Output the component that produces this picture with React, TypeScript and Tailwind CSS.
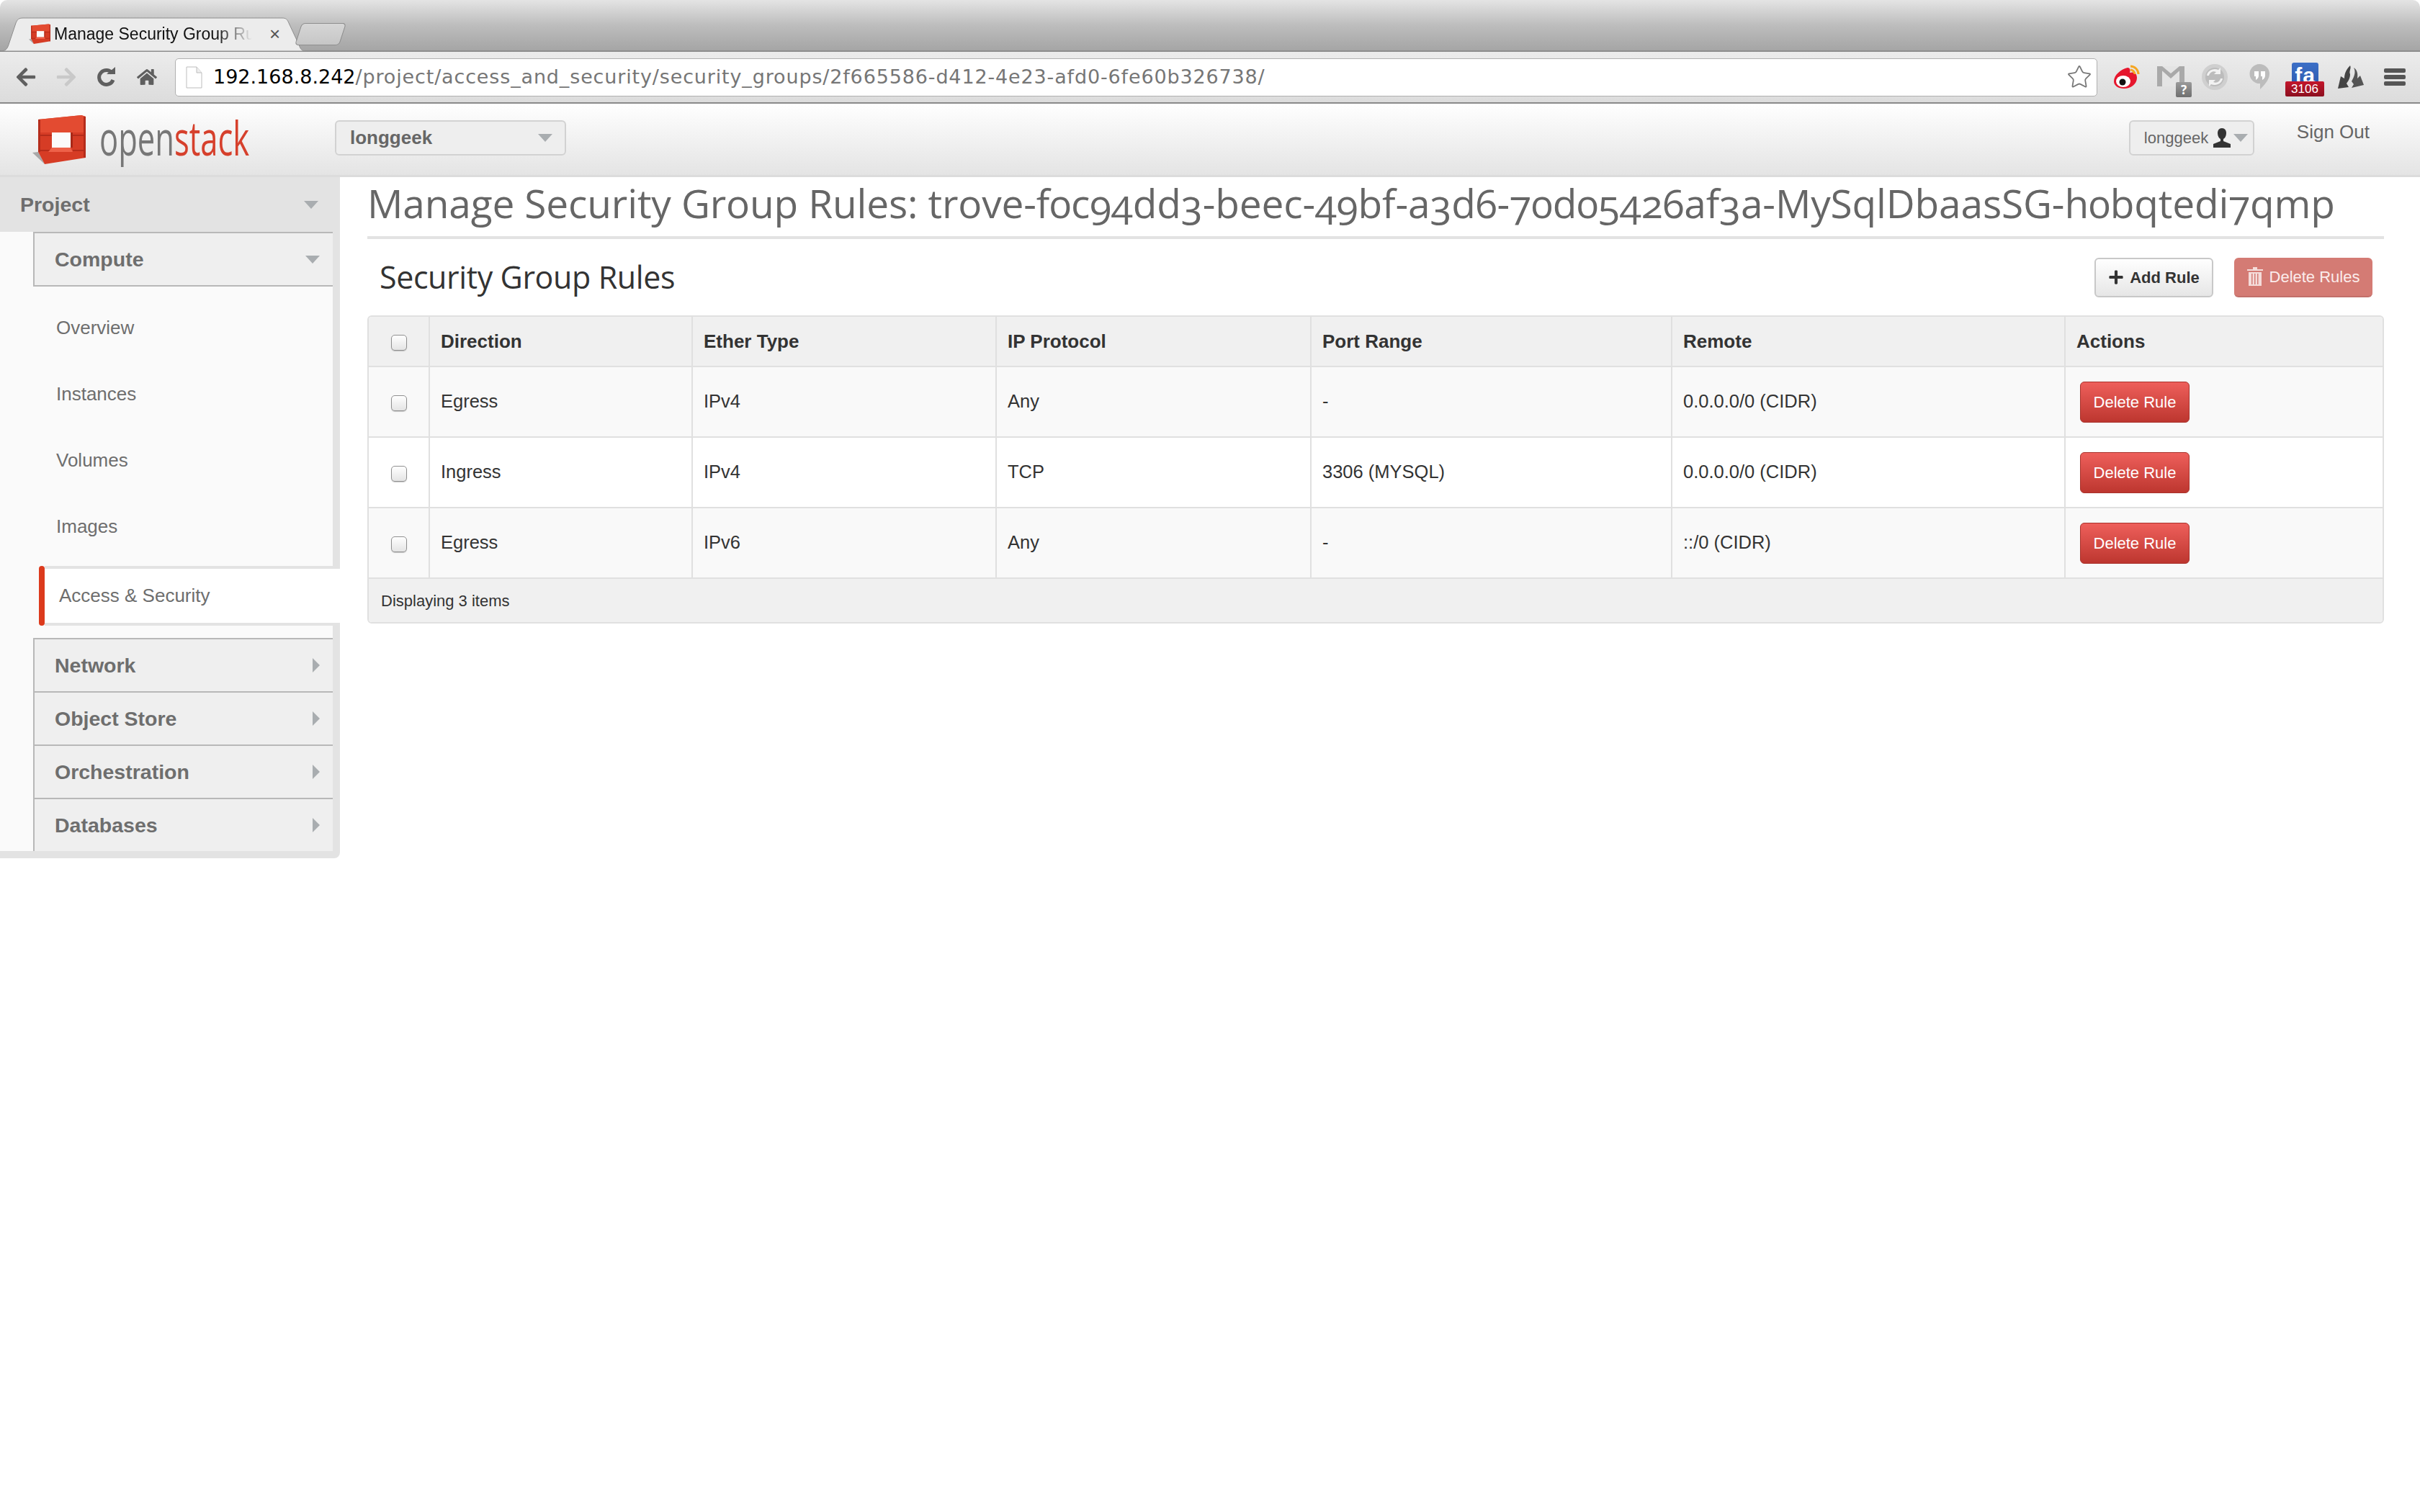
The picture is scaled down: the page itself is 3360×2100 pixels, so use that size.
import React from 'react';
import { FaArrowLeft, FaArrowRight, FaHome, FaPlus } from 'react-icons/fa';
import { Star } from 'lucide-react';

const sans = "font-['Liberation_Sans',Arial,sans-serif]";
const columns = [84, 365, 422, 437, 501, 546, 441];
const headers = ['Direction', 'Ether Type', 'IP Protocol', 'Port Range', 'Remote', 'Actions'];
const rules = [
  ['Egress', 'IPv4', 'Any', '-', '0.0.0.0/0 (CIDR)'],
  ['Ingress', 'IPv4', 'TCP', '3306 (MYSQL)', '0.0.0.0/0 (CIDR)'],
  ['Egress', 'IPv6', 'Any', '-', '::/0 (CIDR)'],
];

const CaretDown = ({ className = '' }: { className?: string }) => (
  <svg className={className} width="20" height="11" viewBox="0 0 20 11">
    <path d="M0 0h20L10 11z" fill="#a9adb0" />
  </svg>
);

const CaretRight = () => (
  <svg width="10" height="20" viewBox="0 0 10 20">
    <path d="M0 0l10 10L0 20z" fill="#a9adb0" />
  </svg>
);

// OpenStack cube
const Logo = ({ size }: { size: number }) => (
  <svg width={size} height={(size * 70) / 74} viewBox="0 0 74 70">
    <path d="M0 53l8-1 9 17z" fill="#a8a8a8" />
    <path d="M8 7L68 1l6 2v57L17 69 8 52z" fill="#d63c25" />
    <path d="M8 7L68 1l6 2v22H8z" fill="#e34b31" />
    <path d="M8 7h3v45H8zM71 3h3v57h-3z" fill="#b52c1b" />
    <path d="M27 25h26v21H27z" fill="#fbfbfb" />
    <path d="M53 25h3v21h-3z" fill="#a92817" />
    <path d="M8 28h19v2H8zM56 28h15v2H56zM8 49h19v2H8zM56 49h15v2H56z" fill="#b52c1b" />
    <path d="M27 46h26l3 6H22z" fill="#ee6149" />
  </svg>
);

const ReloadIcon = () => (
  <svg width="26" height="28" viewBox="0 0 26 28">
    <path d="M22 9A10 10 0 1 0 23 18" fill="none" stroke="#5f5f5f" strokeWidth="5" />
    <path d="M14 10h12V0z" fill="#5f5f5f" />
  </svg>
);

const PageIcon = () => (
  <svg width="23" height="31" viewBox="0 0 23 31">
    <path d="M1 1h14l7 8v21H1z" fill="#fff" stroke="#bdbdbd" />
    <path d="M15 1v8h7" fill="#eee" stroke="#bdbdbd" />
  </svg>
);

const WeiboIcon = () => (
  <svg width="38" height="34" viewBox="0 0 38 34">
    <path d="M2 23C2 14 12 6 21 4c4 0 4 4 3 7 6-2 10 1 10 7 0 9-9 15-18 15C8 33 2 29 2 23z" fill="#e6162d" />
    <ellipse cx="15" cy="23" rx="10" ry="8" fill="#fff" />
    <circle cx="14" cy="24" r="4.5" fill="#111" />
    <path d="M25 2c6 0 11 5 11 11M25 7c3 0 6 3 6 6" fill="none" stroke="#f5a623" strokeWidth="3" />
  </svg>
);

const GmailIcon = () => (
  <div className="relative w-[48px] h-[44px]">
    <svg width="38" height="28" viewBox="0 0 38 28">
      <path d="M0 0h38v28H0z" fill="#e4e4e4" />
      <path d="M0 0h7v28H0zM31 0h7v28h-7z" fill="#a9a9a9" />
      <path d="M0 0h7l12 10L31 0h7L19 17z" fill="#a9a9a9" />
    </svg>
    <div className="absolute left-[26px] top-[22px] w-[22px] h-[21px] rounded-[2px] bg-gradient-to-b from-[#9a9a9a] to-[#6f6f6f] text-white text-[17px] leading-[21px] text-center font-bold">?</div>
  </div>
);

const SyncIcon = () => (
  <svg width="36" height="36" viewBox="0 0 36 36">
    <circle cx="18" cy="18" r="18" fill="#cfcfcf" />
    <circle cx="18" cy="18" r="13" fill="#bcbcbc" />
    <path d="M7 16C8 9 16 5 23 8l3-3v9h-9l3-3C15 9 11 12 10 16zM29 20c-1 7-9 11-16 8l-3 3v-9h9l-3 3c5 2 9-1 10-5z" fill="#f2f2f2" />
  </svg>
);

const HangoutsIcon = () => (
  <svg width="28" height="36" viewBox="0 0 28 36">
    <path d="M14 0a14 13.5 0 0 1 14 13.5C28 22 20 30 15 35v-8A14 13.5 0 0 1 14 0z" fill="#bcbcbc" />
    <path d="M7 10h6v6c0 3-2 5-4 6v-5H7zM16 10h6v6c0 3-2 5-4 6v-5h-2z" fill="#fff" />
  </svg>
);

const FeedlyIcon = () => (
  <div className="relative w-[54px] h-[47px] overflow-visible">
    <div className="absolute left-[9px] top-0 w-[37px] h-[26px] rounded-t-[3px] bg-gradient-to-b from-[#3c6fc6] to-[#2f5fb5] overflow-hidden flex justify-center">
      <span className={`${sans} text-white text-[30px] leading-[36px] font-bold tracking-[1px]`}>fa</span>
    </div>
    <div className={`${sans} absolute left-0 top-[26px] w-[54px] h-[21px] rounded-[2px] bg-gradient-to-b from-[#c4162b] to-[#8c0f1f] text-white text-[17px] leading-[21px] text-center`}>3106</div>
  </div>
);

const BirdIcon = () => (
  <svg width="40" height="33" viewBox="0 0 40 33">
    <path d="M20 0C14 6 12 12 12 18L7 15 3 32l15-2-3-5c2-3 5-7 5-13-2-4 2-8 0-12z" fill="#444" />
    <path d="M25 3c3 5 1 11-1 15l-2 4 3 4-3 5 17-4-5-13-4 4c1-6 0-12-5-15z" fill="#555" />
  </svg>
);

const HamburgerIcon = () => (
  <div className="flex flex-col gap-[3px] w-[30px]">
    <div className="h-[6px] rounded-[2px] bg-[#555]" />
    <div className="h-[6px] rounded-[2px] bg-[#555]" />
    <div className="h-[6px] rounded-[2px] bg-[#555]" />
  </div>
);

const TrashIcon = () => (
  <svg width="22" height="26" viewBox="0 0 22 26">
    <path d="M0 3h8V0h6v3h8v2H0zM2 7h18v19H2z" fill="#f4dcda" />
    <path d="M6 9h1.5v15H6zM10 9h1.5v15H10zM14 9h1.5v15H14z" fill="#d47b74" />
  </svg>
);

const UserIcon = () => (
  <svg width="26" height="27" viewBox="0 0 26 27">
    <path d="M13 0c4 0 6 3 6 7s-2 7-4 8v3l10 4v5H1v-5l10-4v-3C9 14 7 11 7 7s2-7 6-7z" fill="#333" />
  </svg>
);

const Checkbox = () => (
  <div className="w-[22px] h-[22px] mx-auto mt-[3px] rounded-[5px] border border-[#8f8f8f] bg-gradient-to-b from-white to-[#e4e4e4] shadow-[0_1px_1px_rgba(0,0,0,0.2)]" />
);

const ChromeBar = () => (
  <div className="h-[144px] flex flex-col">
    {/* tab strip */}
    <div className="relative h-[72px] rounded-t-[10px] bg-gradient-to-b from-[#e4e4e4] via-[#bdbdbd] to-[#a5a5a5] border-b-2 border-[#8e8e8e]">
      <div className="absolute left-0 top-[24px] w-[424px] h-[48px]">
        <svg className="absolute inset-0" width="424" height="48" viewBox="0 0 424 48">
          <path d="M0 47c8 0 10-3 12-9L22 8c2-5 4-7 10-7h360c5 0 7 2 9 7l14 30c2 6 4 9 9 9z" fill="#ececec" stroke="#8e8e8e" />
        </svg>
        <div className="absolute left-[40px] top-[8px] flex items-center">
          <Logo size={30} />
          <span className={`${sans} ml-[5px] w-[275px] whitespace-nowrap text-[23px] leading-[30px] text-[#111] [mask-image:linear-gradient(to_right,black_82%,transparent_100%)]`}>Manage Security Group Ru</span>
          <span className={`${sans} ml-[24px] text-[26px] leading-[30px] text-[#555]`}>×</span>
        </div>
      </div>
      <div className="absolute left-[414px] top-[32px] w-[62px] h-[31px] -skew-x-[18deg] rounded-[5px] border border-[#8e8e8e] bg-gradient-to-b from-[#d6d6d6] to-[#c6c6c6]" />
    </div>
    {/* toolbar */}
    <div className="h-[72px] flex items-center bg-gradient-to-b from-[#ececec] to-[#dcdcdc] border-b-2 border-[#8a8a8a] pl-[20px] pr-[20px]">
      <FaArrowLeft className="text-[#5f5f5f] text-[32px] w-[32px] h-[30px]" />
      <FaArrowRight className="ml-[24px] text-[#c9c9c9] text-[32px] w-[32px] h-[30px]" />
      <div className="ml-[26px]"><ReloadIcon /></div>
      <FaHome className="ml-[30px] text-[#5f5f5f] w-[28px] h-[28px]" />
      <div className="ml-[25px] flex-1 h-[53px] flex items-center rounded-[5px] border border-[#b0b0b0] bg-white pl-[14px] pr-[6px]">
        <PageIcon />
        <span className="ml-[15px] whitespace-nowrap font-['DejaVu_Sans',sans-serif] text-[27px] text-[#767676]">
          <span className="text-black">192.168.8.242</span>
          <span className="tracking-[0.85px]">/project/access_and_security/security_groups/2f665586-d412-4e23-afd0-6fe60b326738/</span>
        </span>
        <Star className="ml-auto text-[#777] w-[36px] h-[36px]" strokeWidth={1.2} />
      </div>
      <div className="ml-[21px]"><WeiboIcon /></div>
      <div className="ml-[24px] mt-[14px]"><GmailIcon /></div>
      <div className="ml-[14px]"><SyncIcon /></div>
      <div className="ml-[30px]"><HangoutsIcon /></div>
      <div className="ml-[22px] mt-[6px]"><FeedlyIcon /></div>
      <div className="ml-[16px]"><BirdIcon /></div>
      <div className="ml-[27px]"><HamburgerIcon /></div>
    </div>
  </div>
);

const TopBar = () => (
  <div className={`${sans} h-[102px] flex items-center bg-gradient-to-b from-white to-[#e4e4e4] border-b-[3px] border-[#dcdcdc] pl-[45px] pr-[70px] pb-[4px]`}>
    <div className="mt-[5px]"><Logo size={74} /></div>
    <div className="ml-[19px] w-[209px] h-[70px] mb-[2px]">
      <div className="origin-left scale-x-[0.67] whitespace-nowrap font-['Open_Sans',sans-serif] text-[65px] leading-[70px]">
        <span className="text-[#777]">open</span><span className="text-[#d6402c]">stack</span>
      </div>
    </div>
    <div className="ml-[118px] w-[321px] h-[49px] flex items-center justify-between rounded-[6px] border-2 border-[#d2d2d2] bg-[#eeeeee] pl-[19px] pr-[17px]">
      <span className="text-[26px] font-bold text-[#666]">longgeek</span>
      <CaretDown />
    </div>
    <div className="ml-auto w-[174px] h-[49px] flex items-center rounded-[6px] border-2 border-[#d2d2d2] bg-[#eeeeee] pl-[19px]">
      <span className="text-[22px] text-[#666]">longgeek</span>
      <div className="ml-[6px]"><UserIcon /></div>
      <CaretDown className="ml-[3px]" />
    </div>
    <span className="ml-[59px] mb-[16px] text-[26px] text-[#666]">Sign Out</span>
  </div>
);

const NavHeader = ({ label, open }: { label: string; open?: boolean }) => (
  <div className="h-[74px] flex items-center justify-between border-t-2 border-l-2 border-[#b8b8b8] bg-[#efefef] pl-[28px] pr-[18px]">
    <span className="text-[28.5px] font-bold text-[#6e6e6e]">{label}</span>
    {open ? <CaretDown /> : <CaretRight />}
  </div>
);

const Sidebar = () => (
  <div className={`${sans} w-[472px] h-[946px] shrink-0 rounded-br-[8px] bg-[#e3e3e3] pr-[10px] pb-[10px]`}>
    <div className="h-[76px] flex items-center justify-between pl-[28px] pr-[20px]">
      <span className="text-[28.5px] font-bold text-[#6e6e6e]">Project</span>
      <CaretDown />
    </div>
    <div className="h-[860px] bg-[#fafafa] flex flex-col">
      <div className="ml-[46px] border-b-2 border-[#b8b8b8]"><NavHeader label="Compute" open /></div>
      <div className="flex flex-col pt-[11px] pl-[78px]">
        {['Overview', 'Instances', 'Volumes', 'Images'].map((item) => (
          <div key={item} className="h-[92px] flex items-center text-[26px] text-[#6e6e6e]">{item}</div>
        ))}
      </div>
      <div className="mt-[9px] -mr-[10px] ml-[54px] h-[84px] flex">
        <div className="w-[8px] rounded-[4px] bg-[#dc3a1c]" />
        <div className="flex-1 flex items-center border-y-4 border-[#e3e3e3] bg-white pl-[20px] text-[26px] text-[#6e6e6e]">Access &amp; Security</div>
      </div>
      <div className="mt-[17px] ml-[46px]">
        {['Network', 'Object Store', 'Orchestration', 'Databases'].map((item) => (
          <NavHeader key={item} label={item} />
        ))}
      </div>
    </div>
  </div>
);

const RulesTable = () => (
  <div className={`${sans} rounded-[6px] border-2 border-[#e0e0e0] overflow-hidden`}>
    <table className="w-full table-fixed border-collapse text-[25.5px] text-[#333]">
      <colgroup>
        {columns.map((width, i) => (
          <col key={i} style={{ width }} />
        ))}
      </colgroup>
      <thead>
        <tr className="h-[69px] bg-[#f0f0f0]">
          <th className="border-r-2 border-b-2 border-[#e0e0e0]"><Checkbox /></th>
          {headers.map((header, i) => (
            <th key={header} className={`${i < 5 ? 'border-r-2' : ''} border-b-2 border-[#e0e0e0] px-[15px] text-left text-[26px] font-bold`}>{header}</th>
          ))}
        </tr>
      </thead>
      <tbody>
        {rules.map((rule, r) => (
          <tr key={r} className={`h-[98px] ${r === 1 ? 'bg-white' : 'bg-[#f9f9f9]'}`}>
            <td className="border-r-2 border-b-2 border-[#e0e0e0]"><Checkbox /></td>
            {rule.map((cell, c) => (
              <td key={c} className="border-r-2 border-b-2 border-[#e0e0e0] px-[15px] pb-[2px]">{cell}</td>
            ))}
            <td className="border-b-2 border-[#e0e0e0] pl-[20px]">
              <button className="w-[152px] h-[57px] rounded-[6px] border border-[#a9332c] bg-gradient-to-b from-[#ee5f5b] to-[#bd362f] text-[22px] text-white">Delete Rule</button>
            </td>
          </tr>
        ))}
      </tbody>
    </table>
    <div className="h-[60px] flex items-center bg-[#f0f0f0] pl-[17px] text-[22px] text-[#333]">Displaying 3 items</div>
  </div>
);

const Main = () => (
  <div className="flex-1 pl-[38px] pr-[50px]">
    <div className="h-[86px] border-b-4 border-[#e3e3e3] font-['Open_Sans',sans-serif] text-[55px] leading-[72px] tracking-[-0.15px] text-[#666] whitespace-nowrap oldstyle-nums">
      Manage Security Group Rules: trove-f0c94dd3-beec-49bf-a3d6-70d05426af3a-MySqlDbaasSG-h0bqtedi7qmp
    </div>
    <div className="h-[106px] flex items-center pl-[17px] pr-[16px]">
      <h3 className="font-['Open_Sans',sans-serif] text-[43px] tracking-[-0.4px] text-[#333]">Security Group Rules</h3>
      <button className={`${sans} ml-auto w-[165px] h-[55px] flex items-center justify-center gap-[8px] rounded-[6px] border-2 border-[#c8c8c8] bg-gradient-to-b from-white to-[#e6e6e6] text-[22px] font-bold text-[#333]`}>
        <FaPlus className="w-[22px] h-[22px]" />
        Add Rule
      </button>
      <button className={`${sans} ml-[29px] w-[192px] h-[55px] flex items-center justify-center gap-[9px] rounded-[6px] bg-[#d47b74] border-b-2 border-[#c26f69] text-[22px] text-[#fbeceb]`}>
        <TrashIcon />
        Delete Rules
      </button>
    </div>
    <RulesTable />
  </div>
);

export default function App() {
  return (
    <div className="min-h-screen bg-white">
      <ChromeBar />
      <TopBar />
      <div className="flex">
        <Sidebar />
        <Main />
      </div>
    </div>
  );
}
